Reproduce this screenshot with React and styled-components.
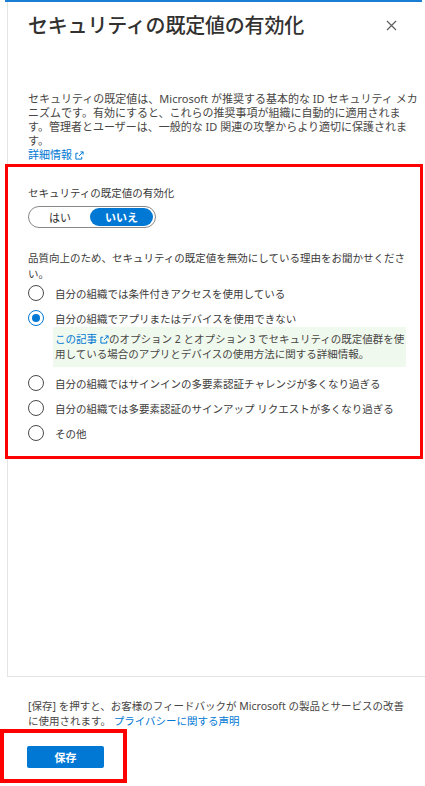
import React, { useState } from "react";
import styled, { createGlobalStyle } from "styled-components";

const GlobalStyle = createGlobalStyle`
  html, body {
    margin: 0;
    padding: 0;
    background: #fff;
  }
  body {
    font-family: "Noto Sans", "Noto Sans CJK JP", sans-serif;
    color: #3b3a39;
  }
  * { box-sizing: border-box; }
`;

const Frame = styled.div`
  width: 425px;
  height: 786px;
  background: #fff;
  display: flex;
  flex-direction: column;
  overflow: hidden;
`;

const TopLine = styled.div`
  margin-left: 5px;
  width: 417px;
  height: 2px;
  background: #1a7fd4;
`;

const Body = styled.div`
  margin-left: 7px;
  height: 675px;
  border-left: 1px solid #e4e4e4;
  border-bottom: 1px solid #e4e4e4;
  padding-left: 20px;
  display: flex;
  flex-direction: column;
`;

const Header = styled.div`
  display: flex;
  align-items: center;
  justify-content: space-between;
  height: 28px;
  margin-top: 9px;
  padding-right: 28px;
`;

const Title = styled.h1`
  margin: 0;
  font-family: "Noto Sans CJK JP", sans-serif;
  font-size: 20px;
  font-weight: 500;
  color: #323130;
  line-height: 28px;
  letter-spacing: -0.2px;
`;

const CloseButton = styled.button`
  border: none;
  background: none;
  padding: 0;
  width: 12px;
  height: 12px;
  display: flex;
  align-items: center;
  justify-content: center;
  color: #605e5c;
  cursor: pointer;
`;

const Description = styled.p`
  margin: 53px 0 0;
  font-size: 11px;
  line-height: 14px;
  color: #484644;
  white-space: nowrap;
`;

const Link = styled.a`
  color: #0078d4;
  text-decoration: none;
  cursor: pointer;
`;

const ExternalIcon = () => (
  <svg width="9" height="9" viewBox="0 0 10 10" style={{ marginLeft: 3, verticalAlign: "-1px" }}>
    <path d="M6 1h3v3M9 1L4.5 5.5M7.5 6.5v2.5h-6.5v-6.5h2.5" fill="none" stroke="currentColor" strokeWidth="1.1" />
  </svg>
);

const Highlight = styled.section`
  margin: 2px 0 0 -23px;
  width: 418px;
  border: 3px solid #ff0000;
  padding: 19px 10px 13px 20px;
  font-size: 10.5px;
  color: #3b3a39;
`;

const FieldLabel = styled.div`
  line-height: 14px;
  white-space: nowrap;
`;

const Toggle = styled.div`
  margin-top: 6px;
  width: 128px;
  height: 22px;
  border: 1px solid #8a8886;
  border-radius: 11px;
  display: flex;
  align-items: center;
  padding: 1px 2px 1px 1px;
`;

const ToggleOption = styled.button`
  flex: ${(p) => (p.$grow ? 1.05 : 1)};
  height: 18px;
  border: none;
  border-radius: 9px;
  padding: 0;
  font-family: inherit;
  font-size: 11px;
  font-weight: ${(p) => (p.$active ? 700 : 400)};
  background: ${(p) => (p.$active ? "#0078d4" : "transparent")};
  color: ${(p) => (p.$active ? "#fff" : "#323130")};
  cursor: pointer;
`;

const Question = styled.div`
  margin-top: 22px;
  line-height: 16px;
  white-space: nowrap;
`;

const RadioList = styled.div`
  margin-top: 1px;
  display: flex;
  flex-direction: column;
`;

const RadioRow = styled.label`
  display: flex;
  align-items: center;
  gap: 11px;
  height: 20px;
  margin-top: ${(p) => p.$gap}px;
  white-space: nowrap;
  cursor: pointer;
`;

const RadioCircle = styled.span`
  width: 16px;
  height: 16px;
  flex: none;
  border-radius: 50%;
  border: 1.5px solid ${(p) => (p.$checked ? "#0078d4" : "#4a4a4a")};
  display: flex;
  align-items: center;
  justify-content: center;

  &::after {
    content: "";
    width: 8px;
    height: 8px;
    border-radius: 50%;
    background: ${(p) => (p.$checked ? "#0078d4" : "transparent")};
  }
`;

const InfoBox = styled.div`
  margin: -1px 0 0 25px;
  width: 353px;
  padding: 5px 2px;
  background: #f0f9ee;
  line-height: 15px;
  color: #484644;
  white-space: nowrap;
`;

const Spacer = styled.div`
  flex: 1;
`;

const Footer = styled.footer`
  padding-top: 22px;
`;

const FooterNote = styled.p`
  margin: 0 0 0 28px;
  font-size: 10.5px;
  line-height: 15px;
  color: #484644;
  white-space: nowrap;
`;

const SaveFrame = styled.div`
  width: 127px;
  border: 4px solid #ff0000;
  padding: 12px 19px 11px 23px;
`;

const SaveButton = styled.button`
  width: 77px;
  height: 22px;
  border: none;
  border-radius: 2px;
  background: #0078d4;
  color: #fff;
  font-family: inherit;
  font-size: 11px;
  font-weight: 700;
  cursor: pointer;
`;

const reasons = [
  "自分の組織では条件付きアクセスを使用している",
  "自分の組織でアプリまたはデバイスを使用できない",
  "自分の組織ではサインインの多要素認証チャレンジが多くなり過ぎる",
  "自分の組織では多要素認証のサインアップ リクエストが多くなり過ぎる",
  "その他",
];

export default function App() {
  const [enabled, setEnabled] = useState(false);
  const [reason, setReason] = useState(1);

  return (
    <>
      <GlobalStyle />
      <Frame>
        <TopLine />
        <Body>
          <Header>
            <Title>セキュリティの既定値の有効化</Title>
            <CloseButton aria-label="閉じる">
              <svg width="11" height="11" viewBox="0 0 11 11">
                <path d="M1 1l9 9M10 1l-9 9" stroke="currentColor" strokeWidth="1.2" />
              </svg>
            </CloseButton>
          </Header>

          <Description>
            セキュリティの既定値は、Microsoft が推奨する基本的な ID セキュリティ メカ
            <br />
            ニズムです。有効にすると、これらの推奨事項が組織に自動的に適用されま
            <br />
            す。管理者とユーザーは、一般的な ID 関連の攻撃からより適切に保護されま
            <br />
            す。
            <br />
            <Link>
              詳細情報
              <ExternalIcon />
            </Link>
          </Description>

          <Highlight>
            <FieldLabel>セキュリティの既定値の有効化</FieldLabel>
            <Toggle>
              <ToggleOption $active={enabled} onClick={() => setEnabled(true)}>
                はい
              </ToggleOption>
              <ToggleOption $grow $active={!enabled} onClick={() => setEnabled(false)}>
                いいえ
              </ToggleOption>
            </Toggle>

            <Question>
              品質向上のため、セキュリティの既定値を無効にしている理由をお聞かせくださ
              <br />
              い。
            </Question>

            <RadioList>
              {reasons.map((text, i) => (
                <React.Fragment key={text}>
                  <RadioRow $gap={i === 0 ? 0 : i === 2 ? 6 : 5} onClick={() => setReason(i)}>
                    <RadioCircle $checked={reason === i} />
                    {text}
                  </RadioRow>
                  {i === 1 && reason === 1 && (
                    <InfoBox>
                      <Link>
                        この記事
                        <ExternalIcon />
                      </Link>
                      のオプション 2 とオプション 3 でセキュリティの既定値群を使
                      <br />
                      用している場合のアプリとデバイスの使用方法に関する詳細情報。
                    </InfoBox>
                  )}
                </React.Fragment>
              ))}
            </RadioList>
          </Highlight>
          <Spacer />
        </Body>

        <Footer>
          <FooterNote>
            [保存] を押すと、お客様のフィードバックが Microsoft の製品とサービスの改善
            <br />
            に使用されます。 <Link>プライバシーに関する声明</Link>
          </FooterNote>
          <SaveFrame>
            <SaveButton>保存</SaveButton>
          </SaveFrame>
        </Footer>
      </Frame>
    </>
  );
}
